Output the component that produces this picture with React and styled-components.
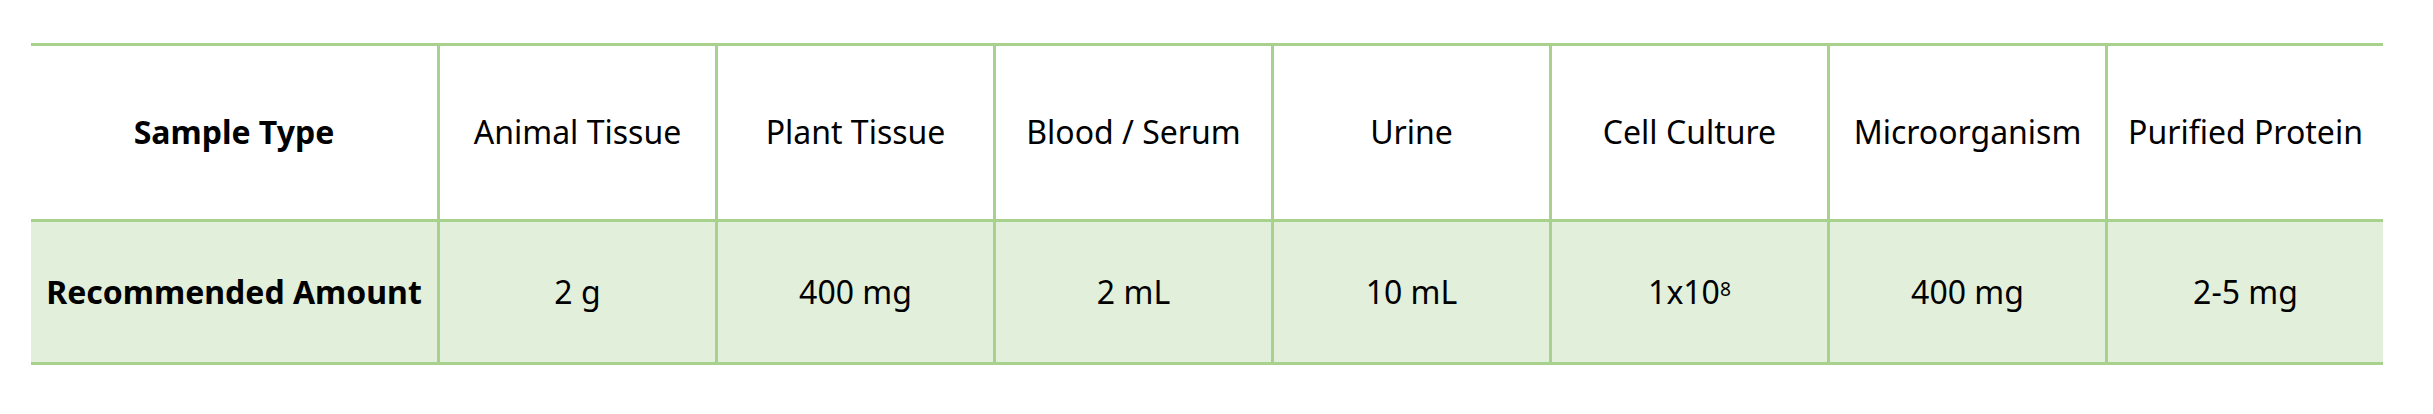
import React from "react";
import styled, { createGlobalStyle } from "styled-components";

const GlobalStyle = createGlobalStyle`
  html, body { margin: 0; padding: 0; background: #ffffff; }
  body { font-family: "Noto Sans", "Open Sans", Arial, sans-serif; color: #000; }
`;

const Page = styled.div`
  padding: 43px 0 0 31px;
`;

const Table = styled.div`
  width: 2352px;
  border-top: 3px solid #a9d18e;
  border-bottom: 3px solid #a9d18e;
  box-sizing: border-box;
`;

const Row = styled.div`
  display: grid;
  grid-template-columns: 406px repeat(7, 1fr);
  height: ${(p) => p.$h}px;
  background: ${(p) => (p.$shaded ? "#e2efda" : "#ffffff")};
  border-top: ${(p) => (p.$divider ? "3px solid #a9d18e" : "none")};
  box-sizing: content-box;
`;

const Cell = styled.div`
  display: flex;
  align-items: center;
  justify-content: center;
  box-sizing: border-box;
  border-left: ${(p) => (p.$first ? "none" : "3px solid #a9d18e")};
  font-size: 32px;
  font-weight: ${(p) => (p.$bold ? 700 : 400)};
  white-space: nowrap;
  padding-bottom: ${(p) => p.$pb || 0}px;
`;

const Sup = styled.sup`
  font-size: 0.6em;
  line-height: 0;
  position: relative;
  top: -0.1em;
`;

const headers = [
  "Animal Tissue",
  "Plant Tissue",
  "Blood / Serum",
  "Urine",
  "Cell Culture",
  "Microorganism",
  "Purified Protein",
];

const amounts = [
  "2 g",
  "400 mg",
  "2 mL",
  "10 mL",
  <>
    1x10<Sup>8</Sup>
  </>,
  "400 mg",
  "2-5 mg",
];

export default function App() {
  return (
    <>
      <GlobalStyle />
      <Page>
        <Table>
          <Row $h={173}>
            <Cell $first $bold $pb={2}>Sample Type</Cell>
            {headers.map((h) => (
              <Cell key={h} $pb={2}>{h}</Cell>
            ))}
          </Row>
          <Row $h={140} $shaded $divider>
            <Cell $first $bold $pb={2}>Recommended Amount</Cell>
            {amounts.map((a, i) => (
              <Cell key={i} $pb={2}>{a}</Cell>
            ))}
          </Row>
        </Table>
      </Page>
    </>
  );
}
